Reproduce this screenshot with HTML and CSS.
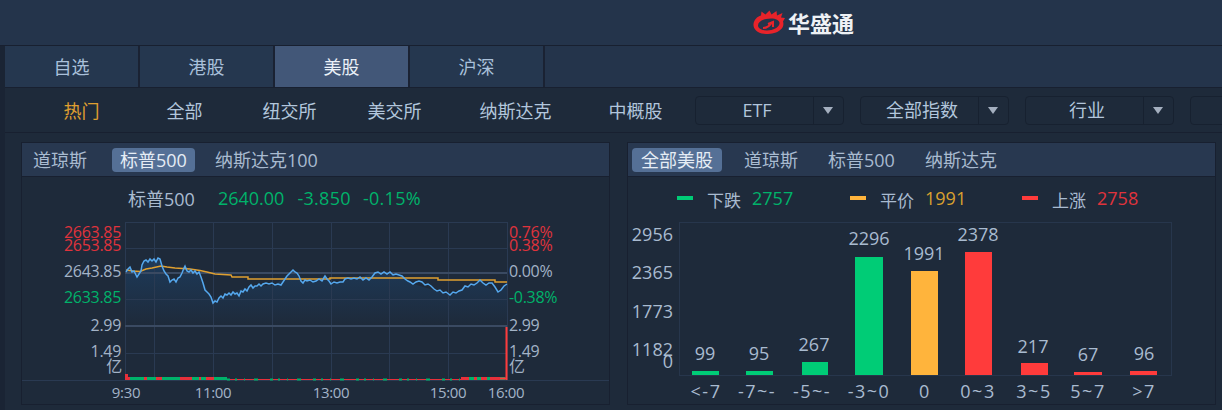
FILE: index.html
```html
<!DOCTYPE html>
<html lang="zh-CN">
<head>
    <meta charset="UTF-8">
    <title>美股</title>
    <link rel="stylesheet" href="styles.css">
</head>
<body>

<header class="topbar">
    <div class="logo">
        <svg class="logo-icon" viewBox="0 0 32 24" width="32" height="24">
            <path fill="#e8232a" fill-rule="evenodd" d="M0.5 14C1 10 4 6.500 8 5.500L8.500 1.500L12.500 4.500L16.500 0.500L18.500 4.500L23.500 1L24 5.500L29.500 3L28 7.500L32 8L30 11.500C31.500 16 29 20 23 22.500C16 25 7 24.500 3 20.500C1 18.500 0.300 16.500 0.500 14ZM5 15.500C5 18.500 9 20.500 14 20.500C20 20.500 26 17.500 26.500 13.500C27 10.500 23 8.500 18 8.500C11 8.500 5 11.500 5 15.500Z"/>
            <path fill="none" stroke="#e8232a" stroke-width="2" d="M10 18C13 18 17 16 19 12M15 14L20 12L20 17"/>
        </svg>
        <span class="logo-text">华盛通</span>
    </div>
</header>

<div class="app">
    <nav class="tabs">
        <a class="tab">自选</a>
        <a class="tab">港股</a>
        <a class="tab active">美股</a>
        <a class="tab">沪深</a>
    </nav>

    <div class="subnav">
        <div class="subnav-links">
            <a class="hot">热门</a>
            <a>全部</a>
            <a>纽交所</a>
            <a>美交所</a>
            <a>纳斯达克</a>
            <a>中概股</a>
        </div>
        <div class="dropdown"><span class="dropdown-label">ETF</span><span class="dropdown-arrow"></span></div>
        <div class="dropdown"><span class="dropdown-label">全部指数</span><span class="dropdown-arrow"></span></div>
        <div class="dropdown"><span class="dropdown-label">行业</span><span class="dropdown-arrow"></span></div>
        <div class="dropdown"><span class="dropdown-label"></span><span class="dropdown-arrow"></span></div>
    </div>

    <main class="panels">
        <section class="panel">
            <div class="panel-head head-index">
                <a class="pill first">道琼斯</a>
                <a class="pill active">标普500</a>
                <a class="pill">纳斯达克100</a>
            </div>
            <div class="quote">
                <span class="quote-name">标普500</span>
                <span class="green quote-price">2640.00</span>
                <span class="green quote-change">-3.850</span>
                <span class="green quote-change">-0.15%</span>
            </div>
            <svg class="chart" viewBox="22 221 587 183" width="587" height="183">
                <defs>
                    <linearGradient id="area" x1="0" y1="0" x2="0" y2="1">
                        <stop offset="0" stop-color="#1d3a5a"/>
                        <stop offset="1" stop-color="#1e2a3a"/>
                    </linearGradient>
                </defs>
                <polygon fill="url(#area)" points="126,272 130,267 137,277 144,261 160,259 170,282 176,282 185,266 201,277 213,303 229,293 249,287 275,285 293,270 303,283 325,276 331,284 360,277 375,273 402,276 413,284 437,291 450,295 480,280 498,292 507,284 507,326 126,326"/>
                <g class="grid">
                    <path d="M125 222.500H507M125 248.500H507M125 299.500H507M125 353.500H507"/>
                    <path d="M125.500 222V380M154.500 222V380M213.500 222V380M272.500 222V380M331.500 222V380M389.500 222V380M448.500 222V380M507.500 222V380"/>
                    <path d="M21 380.500H610"/>
                </g>
                <path class="grid-bold" d="M125 273H507M125 326H507"/>
                <polyline class="avg-line" points="126,270 133,271 140,271.500 146,269 152,268 161,266 167,267 175,268 190,269 200,270.500 207,272 215,274 231,275 232,277 248,277 248,279 330,279 330,278 438,278 438,280 495,280 495,282 507,282"/>
                <polyline class="price-line" points="126,272 128,269 130,267 132,272 134,271 137,277 139,274 141,271 142,265 144,261 146,260 148,262 150,259 152,261 154,259 156,262 158,258 160,259 162,266 164,271 166,274 168,276 170,282 172,280 174,279 176,282 178,278 180,277 182,273 184,268 185,266 187,271 189,272 191,270 193,273 195,271 197,274 199,272 201,277 203,283 205,290 207,292 209,294 211,297 213,303 215,301 217,302 219,298 221,296 223,298 225,294 227,295 229,293 231,295 233,292 235,294 237,293 239,296 241,291 243,292 245,289 247,291 249,287 251,285 253,288 255,286 257,286 259,284 261,286 263,284 266,283 269,284 272,283 275,285 278,284 281,285 283,282 285,279 287,276 290,273 293,270 295,272 297,273 299,276 301,281 303,283 305,280 307,281 310,280 313,282 316,281 319,279 322,281 325,276 327,279 329,281 331,284 334,282 337,283 340,282 343,282 345,279 348,278 351,279 354,278 357,279 360,277 363,280 366,278 369,280 372,277 375,273 378,272 381,274 384,272 387,274 390,272 393,275 396,274 399,275 402,276 405,279 408,281 410,282 413,284 416,282 419,281 422,282 425,285 428,284 431,286 434,289 437,291 440,290 443,293 446,292 450,295 453,292 456,293 459,291 462,290 465,286 468,287 471,284 474,285 477,283 480,280 483,283 486,285 489,283 492,283 495,287 498,292 501,290 504,286 507,284"/>
                <!-- volume bars along the bottom -->
                <path class="vol-red" d="M126.500 380V374M127 378.500H227"/>
                <path class="vol-green" d="M130 378.500H227" stroke-dasharray="14 3 9 6 18 12 7 2 5 8"/>
                <path class="vol-thin-red" d="M227 379.500H462"/>
                <path class="vol-thin-green" d="M227 379.500H462" stroke-dasharray="3 5 2 7 1 9 4 12"/>
                <path class="vol-red" d="M461 378.500H505"/>
                <path class="vol-green" d="M461 378.500H505" stroke-dasharray="0 8 5 3 4 6 3 2"/>
                <path class="vol-spike" d="M506.500 380V327M500 378.500H506"/>
                <g class="axis">
                    <text class="end red" x="121" y="238">2663.85</text>
                    <text class="end red" x="121" y="251">2653.85</text>
                    <text class="end" x="121" y="277">2643.85</text>
                    <text class="end green" x="121" y="303">2633.85</text>
                    <text class="end" x="121" y="331">2.99</text>
                    <text class="end" x="121" y="357">1.49</text>
                    <text class="end" x="122" y="372">亿</text>
                    <text class="red" x="509" y="238">0.76%</text>
                    <text class="red" x="509" y="251">0.38%</text>
                    <text x="509" y="277">0.00%</text>
                    <text class="green" x="509" y="303">-0.38%</text>
                    <text x="509" y="331">2.99</text>
                    <text x="509" y="357">1.49</text>
                    <text x="509" y="372">亿</text>
                </g>
                <g class="axis time">
                    <text class="mid" x="126" y="398">9:30</text>
                    <text class="mid" x="213" y="398">11:00</text>
                    <text class="mid" x="331" y="398">13:00</text>
                    <text class="mid" x="448" y="398">15:00</text>
                    <text class="mid" x="506" y="398">16:00</text>
                </g>
            </svg>
        </section>

        <section class="panel">
            <div class="panel-head head-market">
                <a class="pill active wide">全部美股</a>
                <a class="pill">道琼斯</a>
                <a class="pill">标普500</a>
                <a class="pill">纳斯达克</a>
            </div>
            <div class="legend">
                <div class="legend-item item-down"><i class="swatch bg-green"></i><span class="legend-name">下跌</span><span class="green">2757</span></div>
                <div class="legend-item item-flat"><i class="swatch bg-orange"></i><span class="legend-name">平价</span><span class="orange">1991</span></div>
                <div class="legend-item"><i class="swatch bg-red"></i><span class="legend-name">上涨</span><span class="red">2758</span></div>
            </div>
            <svg class="chart" viewBox="628 221 587 183" width="587" height="183">
                <rect class="plot" x="679.500" y="222.500" width="492" height="153"/>
                <g class="bars-green">
                    <rect x="692" y="371" width="27" height="4"/>
                    <rect x="746" y="371" width="27" height="4"/>
                    <rect x="802" y="362" width="26" height="13"/>
                    <rect x="855" y="257" width="28" height="118"/>
                </g>
                <rect class="bar-orange" x="911" y="271" width="27" height="104"/>
                <g class="bars-red">
                    <rect x="965" y="252" width="27" height="123"/>
                    <rect x="1021" y="363" width="27" height="12"/>
                    <rect x="1074" y="372" width="28" height="3"/>
                    <rect x="1130" y="371" width="27" height="4"/>
                </g>
                <g class="values">
                    <text class="end" x="673" y="241">2956</text>
                    <text class="end" x="673" y="279">2365</text>
                    <text class="end" x="673" y="318">1773</text>
                    <text class="end" x="673" y="356">1182</text>
                    <text class="end" x="673" y="368">0</text>
                    <text class="mid" x="705" y="360">99</text>
                    <text class="mid" x="759" y="360">95</text>
                    <text class="mid" x="814" y="351">267</text>
                    <text class="mid" x="869" y="245">2296</text>
                    <text class="mid" x="924" y="260">1991</text>
                    <text class="mid" x="978" y="241">2378</text>
                    <text class="mid" x="1033" y="353">217</text>
                    <text class="mid" x="1088" y="361">67</text>
                    <text class="mid" x="1144" y="360">96</text>
                </g>
                <g class="values ticks">
                    <text class="mid" x="706" y="398">&lt;-7</text>
                    <text class="mid" x="757" y="398">-7~-</text>
                    <text class="mid" x="812" y="398">-5~-</text>
                    <text class="mid" x="869" y="398">-3~0</text>
                    <text class="mid" x="925" y="398">0</text>
                    <text class="mid" x="978" y="398">0~3</text>
                    <text class="mid" x="1034" y="398">3~5</text>
                    <text class="mid" x="1088" y="398">5~7</text>
                    <text class="mid" x="1144" y="398">&gt;7</text>
                </g>
            </svg>
        </section>
    </main>
</div>

</body>
</html>
```

FILE: styles.css
```css
* {
    box-sizing: border-box;
}
html, body {
    margin: 0;
    height: 410px;
    overflow: hidden;
}
body {
    font-family: "Open Sans", "Noto Sans CJK SC", sans-serif;
    font-size: 18px;
    color: #a9bbd0;
    background-color: #1e2a3a;
}
.green { color: #00b26a; fill: #00b26a; }
.red { color: #e0333c; fill: #e0333c; }
.orange { color: #d9a02f; }
.bg-green { background-color: #00cc76; }
.bg-orange { background-color: #ffb43c; }
.bg-red { background-color: #ff3b3b; }

.topbar {
    height: 46px;
    display: flex;
    align-items: center;
    padding: 0 0 2px 753px;
    background-color: #24344b;
    border-bottom: 1px solid #182030;
}
.logo {
    display: flex;
    align-items: center;
    gap: 3px;
}
.logo-icon {
    display: block;
}
.logo-text {
    font-size: 22px;
    font-weight: 700;
    color: #eef1f5;
}

.app {
    height: 364px;
    border-left: 5px solid #1a2434;
}
.tabs {
    height: 42px;
    display: flex;
    background-color: #24344b;
    border-bottom: 1px solid #182030;
}
.tab {
    width: 135px;
    line-height: 43px;
    text-align: center;
    color: #a9c0da;
    background-color: #25374f;
    border-right: 2px solid #1a2233;
}
.tab.active {
    color: #eaf0f7;
    background-color: #425778;
}
.subnav {
    height: 45px;
    display: flex;
    align-items: center;
    gap: 16px;
    padding: 0 0 0 25px;
    overflow: hidden;
    background-color: #1e2a3a;
    border-bottom: 1px solid #182030;
}
.subnav-links {
    display: grid;
    grid-template-columns: 103px 103px 107px 103px 139px 101px;
    margin-right: -7.500px;
    text-align: center;
    color: #b2c6dc;
}
.hot {
    color: #e0a030;
}
.dropdown {
    flex: none;
    width: 149px;
    height: 29px;
    display: flex;
    border: 1px solid #172130;
    border-radius: 4px;
}
.dropdown-label {
    flex: 1;
    padding-left: 6px;
    line-height: 26px;
    text-align: center;
    color: #b2c6dc;
}
.dropdown-arrow {
    width: 30px;
    display: flex;
    align-items: center;
    justify-content: center;
    border-left: 1px solid #172130;
}
.dropdown-arrow::after {
    content: "";
    border-style: solid;
    border-width: 7px 5.500px 0;
    border-color: #a4afbf transparent transparent;
}

.panels {
    display: flex;
    gap: 17px;
    padding: 9px 0 0 16px;
}
.panel {
    width: 589px;
    height: 263px;
    border: 1px solid #182030;
    display: flex;
    flex-direction: column;
}
.panel-head {
    flex: none;
    height: 34px;
    display: flex;
    align-items: center;
    background-color: #283850;
    border-bottom: 1px solid #182030;
}
.head-index {
    gap: 12px;
    padding-left: 3px;
}
.head-market {
    gap: 14px;
    padding-left: 4px;
}
.pill {
    height: 24px;
    line-height: 24px;
    padding: 0 8px;
    border-radius: 4px;
    color: #a9bbd0;
}
.pill.first {
    margin-right: 5px;
}
.pill.wide {
    padding: 0 9px;
}
.pill.active {
    color: #e6edf5;
    background-color: #557096;
}

.quote {
    flex: none;
    height: 44px;
    display: flex;
    align-items: center;
    padding: 0 0 3px 106px;
}
.quote-name {
    margin-right: 23px;
}
.quote-price {
    margin-right: 13px;
}
.quote-change {
    margin-right: 12px;
    letter-spacing: 0.300px;
}

.chart {
    display: block;
}
.grid path {
    fill: none;
    stroke: #2a3a52;
    stroke-width: 1;
}
.grid-bold {
    fill: none;
    stroke: #3a4a62;
    stroke-width: 2;
}
.avg-line {
    fill: none;
    stroke: #e0a030;
    stroke-width: 1.500;
}
.price-line {
    fill: none;
    stroke: #55a8ee;
    stroke-width: 1.500;
}
.vol-red, .vol-green {
    fill: none;
    stroke-width: 3;
}
.vol-red { stroke: #e8303a; }
.vol-green { stroke: #00b26a; }
.vol-thin-red {
    fill: none;
    stroke: #e8303a;
    stroke-width: 1;
}
.vol-thin-green {
    fill: none;
    stroke: #00b26a;
    stroke-width: 2;
}
.vol-spike {
    fill: none;
    stroke: #ff3b3b;
    stroke-width: 2;
}
.axis text {
    font-size: 16px;
    letter-spacing: -0.3px;
    fill: #a3b3c7;
}
.axis text.red { fill: #e0333c; }
.axis text.green { fill: #00b26a; }
.axis.time text {
    font-size: 15px;
}
.end { text-anchor: end; }
.mid { text-anchor: middle; }

.legend {
    flex: none;
    height: 44px;
    display: flex;
    align-items: center;
    padding: 0 0 3px 49px;
}
.legend-item {
    display: flex;
    align-items: center;
}
.item-down { width: 173px; }
.item-flat { width: 172px; }
.swatch {
    width: 16px;
    height: 4px;
    margin-right: 14px;
}
.legend-name {
    font-size: 17px;
    margin: 3px 11px 0 0;
}

.plot {
    fill: none;
    stroke: #27364c;
}
.bars-green rect { fill: #00cc76; }
.bar-orange { fill: #ffb43c; }
.bars-red rect { fill: #ff3b3b; }
.values text {
    font-size: 18px;
    fill: #a9bbd0;
}
.values.ticks text {
    letter-spacing: 1.500px;
}
```
